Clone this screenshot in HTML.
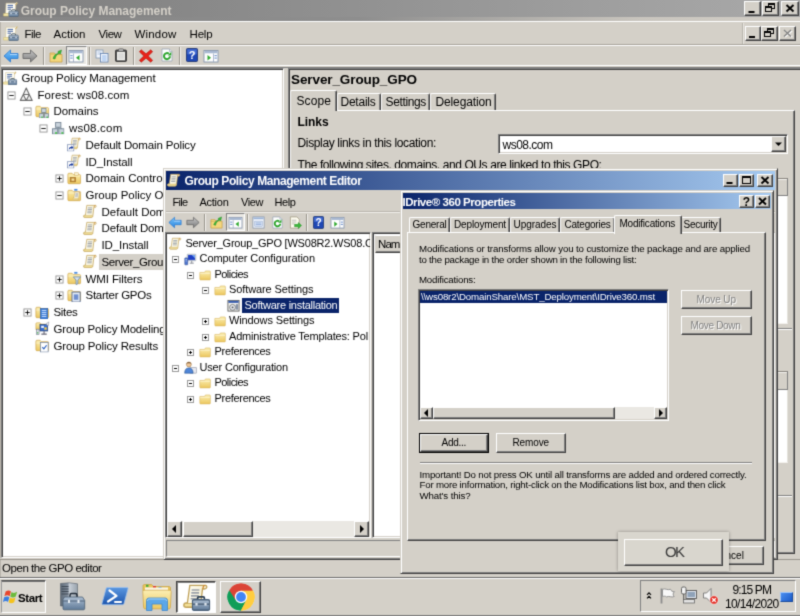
<!DOCTYPE html>
<html><head><meta charset="utf-8"><title>Group Policy Management</title>
<style>
*{box-sizing:border-box;margin:0;padding:0}
html,body{width:800px;height:616px;overflow:hidden;background:#d4d0c8}
body{position:relative;font-family:"Liberation Sans",sans-serif;font-size:12px;color:#000;filter:url(#soft)}
.a{position:absolute;white-space:nowrap}
.sunk{border:1px solid;border-color:#808080 #fff #fff #808080;box-shadow:inset 1px 1px 0 #404040,inset -1px -1px 0 #d4d0c8}
.rais{border:1px solid;border-color:#fff #404040 #404040 #fff;box-shadow:inset -1px -1px 0 #808080;background:#d4d0c8}
.win{border:1px solid;border-color:#d4d0c8 #404040 #404040 #d4d0c8;box-shadow:inset 1px 1px 0 #fff,inset -1px -1px 0 #808080;background:#d4d0c8}
.cap{background:linear-gradient(90deg,#0a246a,#a6caf0)}
.capi{background:linear-gradient(90deg,#7e7e7e,#a9a9a9)}
.vsep{width:2px;border-left:1px solid #9a968e;border-right:1px solid #f4f2ee}
.hsep{height:2px;border-top:1px solid #808080;border-bottom:1px solid #fff}
.pm{width:9px;height:9px;border:1px solid #929292;background:#fff}
.pm:before{content:"";position:absolute;left:1px;top:3px;width:5px;height:1px;background:#000}
.pm.p:after{content:"";position:absolute;left:3px;top:1px;width:1px;height:5px;background:#000}
.pm7{width:7px;height:7px;border:1px solid #9a9a9a;background:#fff}
.pm7:before{content:"";position:absolute;left:1px;top:2px;width:3px;height:1px;background:#000}
.pm7.p:after{content:"";position:absolute;left:2px;top:1px;width:1px;height:3px;background:#000}
.hatch{background:#eae8e3}
.clip{overflow:hidden}
.tab{background:#d4d0c8;border:1px solid;border-color:#fff #404040 transparent #fff;border-bottom:none;box-shadow:inset -1px 0 0 #808080;border-radius:2px 2px 0 0}
.page{background:#d4d0c8;border:1px solid;border-color:#fff #404040 #404040 #fff;box-shadow:inset -1px -1px 0 #808080}
.dis{color:#808080;text-shadow:1px 1px 0 #fff}
</style></head><body>
<svg width="0" height="0" style="position:absolute">
<defs>
<filter id="soft" x="0" y="0" width="100%" height="100%" color-interpolation-filters="sRGB"><feConvolveMatrix order="3" kernelMatrix="0.0225 0.105 0.0225 0.105 0.49 0.105 0.0225 0.105 0.0225" edgeMode="duplicate" preserveAlpha="true"/></filter>
<linearGradient id="gpap" x1="0" y1="0" x2="1" y2="0"><stop offset="0" stop-color="#fffef6"/><stop offset="1" stop-color="#f6efd0"/></linearGradient>
<linearGradient id="gfold" x1="0" y1="0" x2="0" y2="1"><stop offset="0" stop-color="#fbefb4"/><stop offset="1" stop-color="#ecc75e"/></linearGradient>
<linearGradient id="gbox" x1="0" y1="0" x2="0" y2="1"><stop offset="0" stop-color="#aebfd2"/><stop offset="1" stop-color="#5f7a98"/></linearGradient>
<linearGradient id="gblue" x1="0" y1="0" x2="0" y2="1"><stop offset="0" stop-color="#7cc4f8"/><stop offset="1" stop-color="#2a86e0"/></linearGradient>
<linearGradient id="ggray" x1="0" y1="0" x2="0" y2="1"><stop offset="0" stop-color="#c8c8c8"/><stop offset="1" stop-color="#7a7a7a"/></linearGradient>
<symbol id="scroll" viewBox="0 0 16 16">
 <path d="M4.200 1.500h9.500c.9 0 1.200.9.700 1.600-.3.500-.8.600-1.400.600h-1l-1.100 9.300c-.1 1.200-.8 2-1.800 2H2c-.9 0-1.500-.6-1.500-1.300 0-.8.600-1.400 1.500-1.400h.700z" fill="url(#gpap)" stroke="#c0a25a" stroke-width=".8"/>
 <path d="M1.200 12.600h8.600c.5 0 .8.400.8.900 0 .6-.4 1.100-1 1.100H2c-.6 0-1.100-.4-1.100-1 0-.5.100-.8.300-1z" fill="#f3e09a" stroke="#c9aa58" stroke-width=".5"/>
 <path d="M12.200 3.600l.3-1.400c.1-.5.600-.7 1.200-.7" fill="none" stroke="#d08a30" stroke-width=".8"/>
 <path d="M5.300 4.300h4.800M5.100 6.100h4.800M4.900 7.900h4.800M4.700 9.700h4.800" stroke="#9aa0a8" stroke-width="1"/>
</symbol>
<symbol id="toolbox" viewBox="0 0 10 8">
 <path d="M3.200 2V1.100c0-.4.300-.6.600-.6h2.400c.3 0 .6.200.6.600V2" fill="none" stroke="#2c3e50" stroke-width=".9"/>
 <rect x=".4" y="2" width="9.200" height="5.600" rx=".8" fill="url(#gbox)" stroke="#4a6078" stroke-width=".7"/>
 <path d="M.5 4.300h9" stroke="#465a70" stroke-width=".6"/>
 <rect x="2" y="3.700" width="1.200" height="1.400" fill="#dfe6ee"/><rect x="6.800" y="3.700" width="1.200" height="1.400" fill="#dfe6ee"/>
</symbol>
<symbol id="gpmc" viewBox="0 0 16 15">
 <path d="M3 1.200h9.300l1.600-.8.600.9-1.700 1.500-.7 9H2.600z" fill="#fffdf3" stroke="#cfc49c" stroke-width=".6"/>
 <path d="M.6 11.600h6.400v2.400H.6z" fill="#f5e9b0" stroke="#d2bf74" stroke-width=".6"/>
 <path d="M12.300 2.800l2-1.800" stroke="#c89a3c" stroke-width=".9"/>
 <path d="M4.600 3.400h5.400M4.600 5.300h5.400M4.600 7.200h3.400" stroke="#4464a4" stroke-width="1"/>
 <svg x="5.300" y="7.200" width="10.500" height="7.800" viewBox="0 0 10 8" preserveAspectRatio="none"><use href="#toolbox"/></svg>
</symbol>
<symbol id="gpolink" viewBox="0 0 16 16">
 <svg x="2" y="0" width="14" height="14"><use href="#scroll"/></svg>
 <rect x=".5" y="8.500" width="7" height="7" fill="#fff" stroke="#7d8fb3" stroke-width=".8"/>
 <path d="M2 14.200c0-2.400 1-3.500 3-3.500v-1.400l2 2.200-2 2.200v-1.400c-1.400 0-2.200.6-3 1.900z" fill="#1a3a9c"/>
</symbol>
<symbol id="forest" viewBox="0 0 16 16">
 <path d="M8 1.200 11.300 8.200H4.700zM4.700 8.200 8 14.800H1.400zM11.300 8.200 14.600 14.800H8z" fill="#f2f2f2" stroke="#6c6c6c" stroke-width="1.200" stroke-linejoin="round"/>
</symbol>
<symbol id="folder" viewBox="0 0 16 16">
 <path d="M1 3.500c0-.6.400-1 1-1h3.600l1.400 1.500H14c.6 0 1 .4 1 1v8c0 .6-.4 1-1 1H2c-.6 0-1-.4-1-1z" fill="url(#gfold)" stroke="#d0a850" stroke-width=".8"/>
 <path d="M1.400 5.600h13.200" stroke="#fdf6d0" stroke-width=".8"/>
</symbol>
<symbol id="folder2" viewBox="0 0 14 13">
 <path d="M1 3.500h5.500l1-1.700h5c.4 0 .7.300.7.700V11.500c0 .4-.3.700-.7.700H1.700c-.4 0-.7-.3-.7-.7z" fill="url(#gfold)" stroke="#d9b65e" stroke-width=".7"/>
 <path d="M1.400 4.600h11.400" stroke="#fdf6d4" stroke-width=".8"/>
</symbol>
<symbol id="srv3" viewBox="0 0 12 12">
 <rect x="3.500" y=".5" width="5" height="4.500" fill="#c9d3dc" stroke="#6f7f8f" stroke-width=".8"/>
 <rect x=".5" y="6.500" width="5" height="5" fill="#c9d3dc" stroke="#6f7f8f" stroke-width=".8"/>
 <rect x="6.500" y="6.500" width="5" height="5" fill="#c9d3dc" stroke="#6f7f8f" stroke-width=".8"/>
 <path d="M6 5v1.500M3 6.500V5.800h6v.7" stroke="#6f7f8f" stroke-width=".7" fill="none"/>
 <rect x="3" y="9.800" width="1.800" height="1.400" fill="#35c035"/><rect x="9" y="9.800" width="1.800" height="1.400" fill="#35c035"/>
</symbol>
<symbol id="domain" viewBox="0 0 16 16"><svg x="1" y="1" width="14" height="14"><use href="#srv3"/></svg></symbol>
<symbol id="domfolder" viewBox="0 0 16 16"><use href="#folder"/><svg x="4" y="4.500" width="11.500" height="11.500"><use href="#srv3"/></svg></symbol>
<symbol id="ou" viewBox="0 0 16 16"><use href="#folder"/><rect x="3.500" y="7" width="6" height="5" fill="#c08a3a" stroke="#9a6a22" stroke-width=".6"/><rect x="5" y="8.300" width="3" height="2.400" fill="#f6e3a0"/><rect x="8.500" y="2" width="4" height="3" fill="#f8f0d0" stroke="#d0a850" stroke-width=".5"/></symbol>
<symbol id="gpofolder" viewBox="0 0 16 16"><use href="#folder"/><svg x="6" y="3" width="10" height="11"><use href="#scroll"/></svg><rect x="8" y="1" width="3.500" height="2" fill="#4a8be0"/></symbol>
<symbol id="wmifolder" viewBox="0 0 16 16"><use href="#folder"/><path d="M7 6.500h8l-3 3.500v4l-2 1v-5z" fill="#d8e4f0" stroke="#5d7ea0" stroke-width=".8"/><rect x="8" y="1" width="3.500" height="2" fill="#4a8be0"/></symbol>
<symbol id="startergpo" viewBox="0 0 16 16"><use href="#folder"/><rect x="5.500" y="4.500" width="9" height="11" fill="#e4ecf6" stroke="#4b5f88" stroke-width=".9"/><rect x="7.500" y="7" width="5" height="6" fill="#6f8fd0"/></symbol>
<symbol id="sites" viewBox="0 0 16 16"><use href="#folder"/><rect x="6" y="4" width="8" height="11.500" fill="#3f7fd8" stroke="#2457a6" stroke-width=".7"/><path d="M7.500 6h5M7.500 8.200h5M7.500 10.400h5M7.500 12.600h5" stroke="#d6e6ff" stroke-width="1"/></symbol>
<symbol id="modeling" viewBox="0 0 16 16"><path d="M1 3c0-.6.400-1 1-1h3.600l1.400 1.500H11v6H1z" fill="url(#gfold)" stroke="#d0a850" stroke-width=".7"/><rect x="5.500" y="4" width="8.500" height="7" fill="#3a6fd0" stroke="#27406f" stroke-width=".8"/><rect x="6.800" y="5.300" width="3" height="2.400" fill="#e8f0ff"/><rect x="10.300" y="7" width="2.600" height="2.600" fill="#ffd24a"/><path d="M7 14.500h6M10 11v3.500" stroke="#667" stroke-width="1.200"/><rect x="1.500" y="9" width="3" height="6" fill="#d9dee6" stroke="#6a7484" stroke-width=".6"/><rect x="2.300" y="12.500" width="1.300" height="1.200" fill="#2fb82f"/><path d="M12 3l3.500-2-1 4.500z" fill="#e6ebf2" stroke="#778" stroke-width=".5"/></symbol>
<symbol id="results" viewBox="0 0 16 16"><use href="#folder"/><rect x="6" y="5" width="8.500" height="10.500" fill="#fff" stroke="#6d7f9f" stroke-width=".8"/><path d="M8 10l1.800 2 3-4" fill="none" stroke="#2a5fc0" stroke-width="1.300"/></symbol>
<symbol id="back" viewBox="0 0 16 14"><path d="M7.500 1 1 7l6.500 6V9.500H15v-5H7.500z" fill="url(#gblue)" stroke="#2a78d0" stroke-width=".8" stroke-linejoin="round"/><path d="M7 5.500h7" stroke="#b9dcff" stroke-width=".9"/></symbol>
<symbol id="fwd" viewBox="0 0 16 14"><path d="M8.500 1 15 7l-6.500 6V9.500H1v-5h7.500z" fill="url(#ggray)" stroke="#6a6a6a" stroke-width=".9" stroke-linejoin="round"/></symbol>
<symbol id="upfolder" viewBox="0 0 14 14"><path d="M1 5.500h12v7.500H1z" fill="#f4d77c" stroke="#c9a14a" stroke-width=".8"/><path d="M1 5.500V4h4.500l1 1.500" fill="#f4d77c" stroke="#c9a14a" stroke-width=".8"/><path d="M4 9.500c1-3 2.500-4.500 5-5V2.500L12.500 1 11.500 5 10 4.500C8 5.500 6.500 7 6 10z" fill="#3cb83c" stroke="#1e8a1e" stroke-width=".5"/></symbol>
<symbol id="showtree" viewBox="0 0 16 14"><rect x="1" y="1.500" width="14" height="11.500" fill="#fff" stroke="#8494ac" stroke-width=".9"/><rect x="1.500" y="2" width="13" height="2.300" fill="#a9b9d2"/><path d="M5.500 4.500V13" stroke="#9aa8c0" stroke-width=".8"/><rect x="2.300" y="6" width="2.300" height="1.200" fill="#7a9ad0"/><rect x="2.300" y="8.500" width="2.300" height="1.200" fill="#7a9ad0"/><path d="M11.500 6v5.500L8 8.700z" fill="#2fa82f"/></symbol>
<symbol id="hidepane" viewBox="0 0 16 14"><rect x="1" y="1.500" width="14" height="11.500" fill="#fff" stroke="#8494ac" stroke-width=".9"/><rect x="1.500" y="2" width="13" height="2.300" fill="#a9b9d2"/><path d="M10.500 4.500V13" stroke="#9aa8c0" stroke-width=".8"/><rect x="11.500" y="6" width="2.300" height="1.200" fill="#7a9ad0"/><rect x="11.500" y="8.500" width="2.300" height="1.200" fill="#7a9ad0"/><path d="M4.500 6v5.500L8 8.700z" fill="#2fa82f"/></symbol>
<symbol id="copy" viewBox="0 0 14 14"><rect x="1" y="1" width="7" height="8" fill="#f4f8ff" stroke="#7f93b0" stroke-width=".8"/><rect x="5.500" y="4.500" width="7.500" height="8.500" fill="#f4f8ff" stroke="#5f7fb0" stroke-width=".8"/><path d="M7 7h4.500M7 9h4.500M7 11h4.500" stroke="#6f9fe0" stroke-width=".8"/><path d="M2.500 3h4M2.500 5h2.500" stroke="#9fb3d0" stroke-width=".8"/></symbol>
<symbol id="paste" viewBox="0 0 14 14"><rect x="1.500" y="2" width="11" height="11.500" rx="1" fill="#4e4e4e" stroke="#2a2a2a" stroke-width=".8"/><rect x="3" y="3.800" width="8" height="8.500" fill="#f4f4f0"/><path d="M4 6h6M4 8h6M4 10h6" stroke="#b8b8b8" stroke-width=".8"/><rect x="4.500" y=".8" width="5" height="2.600" rx=".8" fill="#b8b8b8" stroke="#444" stroke-width=".6"/></symbol>
<symbol id="del" viewBox="0 0 14 14"><path d="M2.200 .8 7 4.800 11.800 .8 13.600 2.800 9.200 7l4.400 4.200-1.800 2L7 9.200 2.200 13.200.4 11.200 4.800 7 .4 2.800z" fill="#e8231a" stroke="#b01008" stroke-width=".6" stroke-linejoin="round"/></symbol>
<symbol id="refresh" viewBox="0 0 14 14"><path d="M2 1h7.500L12 3.500V13H2z" fill="#fff" stroke="#9aa5b4" stroke-width=".8"/><path d="M9.500 1v2.500H12" fill="#e4e9f0" stroke="#9aa5b4" stroke-width=".6"/><path d="M10 8.300a3 3 0 1 1-1.100-2.500" fill="none" stroke="#2ea52e" stroke-width="2"/><path d="M11.300 3.800v3.600H7.700z" fill="#2ea52e"/></symbol>
<symbol id="help" viewBox="0 0 12 14"><rect x=".5" y=".5" width="11" height="13" rx="1" fill="#1f47b4" stroke="#122a6a" stroke-width=".8"/><rect x="1.300" y="1.300" width="9.400" height="5" fill="#5d86e6" opacity=".6"/><text x="6" y="11.300" font-family="Liberation Sans, sans-serif" font-size="11" font-weight="bold" fill="#fff" text-anchor="middle">?</text></symbol>
<symbol id="props" viewBox="0 0 14 14"><rect x="1" y="1" width="12" height="12" fill="#f8fbff" stroke="#7f8fa8" stroke-width=".8"/><rect x="1.500" y="1.500" width="11" height="2" fill="#9db3d6"/><rect x="3" y="5.500" width="8" height="5.500" fill="#dfe9f8" stroke="#8aa0c8" stroke-width=".6"/><path d="M4 7.500h6M4 9.300h6" stroke="#6f8fc8" stroke-width=".7"/></symbol>
<symbol id="export" viewBox="0 0 14 14"><path d="M1.500 1h7L11 3.500V13H1.500z" fill="#fffdf0" stroke="#a09a80" stroke-width=".8"/><path d="M3 4.500h5M3 6.500h5M3 8.500h3" stroke="#a8a8a8" stroke-width=".8"/><path d="M6 9h4V7l3.500 3.200L10 13.500v-2H6z" fill="#3cb83c" stroke="#1e8a1e" stroke-width=".5"/></symbol>
<symbol id="computer" viewBox="0 0 16 16"><rect x="4" y="1.500" width="10.500" height="8" rx=".6" fill="#dfe4ea" stroke="#8a94a4" stroke-width=".7"/><rect x="5" y="2.500" width="8.500" height="6" fill="#1f3fc4"/><path d="M9.500 2.500h4v4z" fill="#6fa4f4"/><path d="M7 12.500h5M9.500 9.500v3" stroke="#8a8f98" stroke-width="1.200"/><rect x="1" y="6" width="3.600" height="8.500" rx=".6" fill="#4f78d0" stroke="#2a478f" stroke-width=".7"/><path d="M1.800 8h2M1.800 9.800h2" stroke="#cfe0ff" stroke-width=".7"/></symbol>
<symbol id="user" viewBox="0 0 16 16"><rect x="7" y="8" width="8.500" height="7" rx=".6" fill="#e8e8ee" stroke="#8890a0" stroke-width=".7"/><circle cx="6" cy="4.300" r="3" fill="#f0c89a" stroke="#9a7040" stroke-width=".7"/><path d="M3 3.500c.5-2.500 5.500-2.500 6 0-1.500-.8-4.500-.8-6 0z" fill="#6a4a2a"/><path d="M.8 15c0-4.500 2-6.500 5.200-6.500s5.200 2 5.200 6.500z" fill="#4f86d8" stroke="#24508f" stroke-width=".7"/></symbol>
<symbol id="swinst" viewBox="0 0 14 14"><rect x="1" y="1.500" width="12" height="11.500" fill="#f4f4f0" stroke="#555" stroke-width=".9"/><rect x="1.500" y="2" width="11" height="2.200" fill="#3a5fb0"/><circle cx="6" cy="9" r="3.200" fill="#e0e4ea" stroke="#555" stroke-width=".7"/><circle cx="6" cy="9" r="1" fill="#555"/><rect x="9.500" y="5.500" width="2.500" height="6" fill="#8894a8"/></symbol>
</defs></svg>
<div class="a capi" style="left:0px;top:0px;width:800px;height:18px;"></div>
<div class="a " style="left:0px;top:17px;width:800px;height:4px;background:linear-gradient(90deg,#858585 0%,#8e8e8e 45%,#c9c5be 80%,#d2cec6 100%)"></div>
<div class="a " style="left:0px;top:21px;width:800px;height:1px;background:#fff"></div>
<svg class="a" style="left:2.5px;top:2px" width="16" height="15"><use href="#gpmc"/></svg>
<div class="a" style="left:20.80px;top:2.50px;font-size:12px;line-height:16px;letter-spacing:-0.029px;color:#d4d0c8;font-weight:bold;">Group Policy Management</div>
<div class="a rais" style="left:744px;top:1px;width:17px;height:15px;"><svg width="15" height="13" viewBox="1 1 15 13" style="display:block"><rect x="4.5" y="10" width="6" height="2" fill="#000"/></svg></div>
<div class="a rais" style="left:762px;top:1px;width:17px;height:15px;"><svg width="15" height="13" viewBox="1 1 15 13" style="display:block"><rect x="6.5" y="2.5" width="6" height="5" fill="none" stroke="#000"/><rect x="6.0" y="2.0" width="7" height="2" fill="#000"/><rect x="3.5" y="5.5" width="6" height="5" fill="#d4d0c8" stroke="#000"/><rect x="3.0" y="5.0" width="7" height="2" fill="#000"/></svg></div>
<div class="a rais" style="left:781px;top:1px;width:18px;height:15px;"><svg width="16" height="13" viewBox="1 1 16 13" style="display:block"><path d="M5.5 4.0l7 6.500M12.5 4.0l-7 6.500" stroke="#000" stroke-width="1.9"/></svg></div>
<svg class="a" style="left:2.5px;top:26px" width="16" height="15"><use href="#gpmc"/></svg>
<div class="a" style="left:24.50px;top:25.70px;font-size:11.5px;line-height:16px;letter-spacing:-0.508px;color:#000;">File</div>
<div class="a" style="left:53.50px;top:25.70px;font-size:11.5px;line-height:16px;letter-spacing:0.005px;color:#000;">Action</div>
<div class="a" style="left:98.50px;top:25.70px;font-size:11.5px;line-height:16px;letter-spacing:-0.430px;color:#000;">View</div>
<div class="a" style="left:134.50px;top:25.70px;font-size:11.5px;line-height:16px;letter-spacing:0.182px;color:#000;">Window</div>
<div class="a" style="left:189.50px;top:25.70px;font-size:11.5px;line-height:16px;letter-spacing:-0.164px;color:#000;">Help</div>
<div class="a rais" style="left:745px;top:26px;width:16px;height:15px;"><svg width="14" height="13" viewBox="1 1 14 13" style="display:block"><rect x="4.0" y="10" width="6" height="2" fill="#000"/></svg></div>
<div class="a rais" style="left:761px;top:26px;width:17px;height:15px;"><svg width="15" height="13" viewBox="1 1 15 13" style="display:block"><rect x="6.5" y="2.5" width="6" height="5" fill="none" stroke="#000"/><rect x="6.0" y="2.0" width="7" height="2" fill="#000"/><rect x="3.5" y="5.5" width="6" height="5" fill="#d4d0c8" stroke="#000"/><rect x="3.0" y="5.0" width="7" height="2" fill="#000"/></svg></div>
<div class="a rais" style="left:779px;top:26px;width:17px;height:15px;"><svg width="15" height="13" viewBox="1 1 15 13" style="display:block"><path d="M6.0 5.0l7 6M13.0 5.0l-7 6" stroke="#fff" stroke-width="1.6"/><path d="M5.0 4.0l7 6.500M12.0 4.0l-7 6.500" stroke="#808080" stroke-width="1.3"/></svg></div>
<div class="a vsep" style="left:742px;top:23px;width:2px;height:21px;border-right-color:#e8e6e0;border-left-color:#b8b4ac"></div>
<div class="a " style="left:0px;top:44px;width:800px;height:2px;border-top:1px solid #a8a49c;border-bottom:1px solid #fff"></div>
<svg class="a" style="left:3px;top:49px" width="16" height="14"><use href="#back"/></svg>
<svg class="a" style="left:22px;top:49px" width="16" height="14"><use href="#fwd"/></svg>
<div class="a vsep" style="left:43px;top:47px;width:2px;height:18px;"></div>
<svg class="a" style="left:49px;top:49px" width="14" height="14"><use href="#upfolder"/></svg>
<div class="a sunk hatch" style="left:66px;top:46px;width:21px;height:19px;box-shadow:none"></div>
<svg class="a" style="left:68px;top:49px" width="16" height="14"><use href="#showtree"/></svg>
<div class="a vsep" style="left:89px;top:47px;width:2px;height:18px;"></div>
<svg class="a" style="left:95px;top:49px" width="14" height="14"><use href="#copy"/></svg>
<svg class="a" style="left:114px;top:48px" width="14" height="14"><use href="#paste"/></svg>
<div class="a vsep" style="left:133px;top:47px;width:2px;height:18px;"></div>
<svg class="a" style="left:139px;top:49px" width="14" height="14"><use href="#del"/></svg>
<svg class="a" style="left:160px;top:48px" width="14" height="14"><use href="#refresh"/></svg>
<div class="a vsep" style="left:179px;top:47px;width:2px;height:18px;"></div>
<svg class="a" style="left:186px;top:48px" width="12" height="14"><use href="#help"/></svg>
<svg class="a" style="left:203px;top:49px" width="16" height="14"><use href="#hidepane"/></svg>
<div class="a " style="left:0px;top:65px;width:800px;height:3px;border-top:1px solid #fff;border-bottom:1px solid #808080;background:#d4d0c8"></div>
<div class="a sunk" style="left:1px;top:68px;width:283px;height:490px;background:#fff"></div>
<div class="a " style="left:0px;top:22px;width:1px;height:556px;background:#b8b4ac"></div>
<svg class="a" style="left:3.3px;top:70.55px" width="14.5" height="14.5"><use href="#gpmc"/></svg>
<div class="a" style="left:21.50px;top:70.00px;font-size:11.5px;line-height:16px;letter-spacing:-0.094px;color:#000;">Group Policy Management</div>
<svg class="a" style="left:19.3px;top:87.27px" width="14.5" height="14.5"><use href="#forest"/></svg>
<div class="a pm" style="left:6.5px;top:91px;width:9px;height:9px;transform:scale(0.89)"></div>
<div class="a" style="left:37.50px;top:86.72px;font-size:11.5px;line-height:16px;letter-spacing:0.078px;color:#000;">Forest: ws08.com</div>
<svg class="a" style="left:35.3px;top:103.99px" width="14.5" height="14.5"><use href="#domfolder"/></svg>
<div class="a pm" style="left:22.5px;top:107px;width:9px;height:9px;transform:scale(0.89)"></div>
<div class="a" style="left:53.50px;top:103.44px;font-size:11.5px;line-height:16px;letter-spacing:-0.056px;color:#000;">Domains</div>
<svg class="a" style="left:51.3px;top:120.71px" width="14.5" height="14.5"><use href="#domain"/></svg>
<div class="a pm" style="left:38.5px;top:124px;width:9px;height:9px;transform:scale(0.89)"></div>
<div class="a" style="left:69.00px;top:120.16px;font-size:11.5px;line-height:16px;letter-spacing:0.215px;color:#000;">ws08.com</div>
<svg class="a" style="left:67.3px;top:137.43px" width="14.5" height="14.5"><use href="#gpolink"/></svg>
<div class="a" style="left:85.50px;top:136.88px;font-size:11.5px;line-height:16px;letter-spacing:-0.150px;color:#000;">Default Domain Policy</div>
<svg class="a" style="left:67.3px;top:154.15px" width="14.5" height="14.5"><use href="#gpolink"/></svg>
<div class="a" style="left:85.50px;top:153.60px;font-size:11.5px;line-height:16px;letter-spacing:-0.094px;color:#000;">ID_Install</div>
<svg class="a" style="left:67.3px;top:170.87px" width="14.5" height="14.5"><use href="#ou"/></svg>
<div class="a pm p" style="left:54.5px;top:174px;width:9px;height:9px;transform:scale(0.89)"></div>
<div class="a" style="left:85.50px;top:170.32px;font-size:11.5px;line-height:16px;letter-spacing:-0.024px;color:#000;">Domain Controllers</div>
<svg class="a" style="left:67.3px;top:187.59px" width="14.5" height="14.5"><use href="#gpofolder"/></svg>
<div class="a pm" style="left:54.5px;top:191px;width:9px;height:9px;transform:scale(0.89)"></div>
<div class="a" style="left:85.50px;top:187.04px;font-size:11.5px;line-height:16px;letter-spacing:-0.001px;color:#000;">Group Policy Objects</div>
<svg class="a" style="left:83.3px;top:204.31px" width="14.5" height="14.5"><use href="#scroll"/></svg>
<div class="a" style="left:101.50px;top:203.76px;font-size:11.5px;line-height:16px;letter-spacing:0.002px;color:#000;">Default Domain Controllers Policy</div>
<svg class="a" style="left:83.3px;top:221.03px" width="14.5" height="14.5"><use href="#scroll"/></svg>
<div class="a" style="left:101.50px;top:220.48px;font-size:11.5px;line-height:16px;letter-spacing:-0.150px;color:#000;">Default Domain Policy</div>
<svg class="a" style="left:83.3px;top:237.75px" width="14.5" height="14.5"><use href="#scroll"/></svg>
<div class="a" style="left:101.50px;top:237.20px;font-size:11.5px;line-height:16px;letter-spacing:-0.094px;color:#000;">ID_Install</div>
<div class="a " style="left:99px;top:254px;width:104px;height:16px;background:#d4d0c8"></div>
<svg class="a" style="left:83.3px;top:254.46999999999997px" width="14.5" height="14.5"><use href="#scroll"/></svg>
<div class="a" style="left:101.50px;top:253.92px;font-size:11.5px;line-height:16px;letter-spacing:-0.387px;color:#000;">Server_Group_GPO</div>
<svg class="a" style="left:67.3px;top:271.19px" width="14.5" height="14.5"><use href="#wmifolder"/></svg>
<div class="a pm p" style="left:54.5px;top:275px;width:9px;height:9px;transform:scale(0.89)"></div>
<div class="a" style="left:85.50px;top:270.64px;font-size:11.5px;line-height:16px;letter-spacing:-0.104px;color:#000;">WMI Filters</div>
<svg class="a" style="left:67.3px;top:287.91px" width="14.5" height="14.5"><use href="#startergpo"/></svg>
<div class="a pm p" style="left:54.5px;top:291px;width:9px;height:9px;transform:scale(0.89)"></div>
<div class="a" style="left:85.50px;top:287.36px;font-size:11.5px;line-height:16px;letter-spacing:-0.253px;color:#000;">Starter GPOs</div>
<svg class="a" style="left:35.3px;top:304.63px" width="14.5" height="14.5"><use href="#sites"/></svg>
<div class="a pm p" style="left:22.5px;top:308px;width:9px;height:9px;transform:scale(0.89)"></div>
<div class="a" style="left:53.50px;top:304.08px;font-size:11.5px;line-height:16px;letter-spacing:-0.316px;color:#000;">Sites</div>
<svg class="a" style="left:35.3px;top:321.34999999999997px" width="14.5" height="14.5"><use href="#modeling"/></svg>
<div class="a" style="left:53.50px;top:320.80px;font-size:11.5px;line-height:16px;letter-spacing:-0.176px;color:#000;">Group Policy Modeling</div>
<svg class="a" style="left:35.3px;top:338.07px" width="14.5" height="14.5"><use href="#results"/></svg>
<div class="a" style="left:53.50px;top:337.52px;font-size:11.5px;line-height:16px;letter-spacing:-0.144px;color:#000;">Group Policy Results</div>
<div class="a " style="left:288px;top:68px;width:512px;height:490px;border-left:1px solid #808080;border-top:1px solid #808080;box-shadow:inset 1px 1px 0 #404040"></div>
<div class="a" style="left:291.00px;top:72.00px;font-size:13.5px;line-height:16px;letter-spacing:-0.098px;color:#000;font-weight:bold;">Server_Group_GPO</div>
<div class="a page" style="left:290px;top:110px;width:505px;height:444px;"></div>
<div class="a tab" style="left:337px;top:93px;width:44px;height:17px;"></div>
<div class="a" style="left:340.50px;top:94.00px;font-size:12px;line-height:16px;letter-spacing:-0.241px;color:#000;">Details</div>
<div class="a tab" style="left:381px;top:93px;width:49px;height:17px;"></div>
<div class="a" style="left:385.50px;top:94.00px;font-size:12px;line-height:16px;letter-spacing:-0.357px;color:#000;">Settings</div>
<div class="a tab" style="left:430px;top:93px;width:66px;height:17px;"></div>
<div class="a" style="left:435.50px;top:94.00px;font-size:12px;line-height:16px;letter-spacing:-0.138px;color:#000;">Delegation</div>
<div class="a tab" style="left:290px;top:90px;width:47px;height:21px;"></div>
<div class="a" style="left:296.50px;top:92.50px;font-size:12px;line-height:16px;letter-spacing:0.094px;color:#000;">Scope</div>
<div class="a" style="left:297.50px;top:114.00px;font-size:12px;line-height:16px;letter-spacing:-0.069px;color:#000;font-weight:bold;">Links</div>
<div class="a" style="left:297.50px;top:134.50px;font-size:12px;line-height:16px;letter-spacing:-0.352px;color:#000;">Display links in this location:</div>
<div class="a" style="left:297.50px;top:157.00px;font-size:12px;line-height:16px;letter-spacing:-0.407px;color:#000;">The following sites, domains, and OUs are linked to this GPO:</div>
<div class="a sunk" style="left:498px;top:134px;width:290px;height:20px;background:#fff"></div>
<div class="a" style="left:502.50px;top:137.00px;font-size:12px;line-height:16px;letter-spacing:-0.504px;color:#000;">ws08.com</div>
<div class="a rais" style="left:771px;top:136px;width:15px;height:16px;"><svg width="13" height="14" style="display:block"><path d="M3 5.500h7l-3.500 3.500z" fill="#000"/></svg></div>
<div class="a " style="left:777px;top:178px;width:11px;height:146px;background:#fff;border-right:1px solid #e4e2dc;border-bottom:1px solid #f4f2ee"></div>
<div class="a " style="left:777px;top:178px;width:11px;height:18px;background:#d4d0c8;border-top:1px solid #8a8680;box-shadow:inset 0 1px 0 #f4f2ee;border-bottom:1px solid #808080;border-right:1px solid #808080"></div>
<div class="a hsep" style="left:776px;top:328px;width:16px;height:2px;"></div>
<div class="a " style="left:777px;top:371px;width:11px;height:92px;background:#fff;border-right:1px solid #e4e2dc;border-bottom:1px solid #f4f2ee"></div>
<div class="a " style="left:777px;top:371px;width:11px;height:19px;background:#d4d0c8;border-top:1px solid #8a8680;box-shadow:inset 0 1px 0 #f4f2ee;border-bottom:1px solid #808080;border-right:1px solid #808080"></div>
<div class="a hsep" style="left:776px;top:495px;width:16px;height:2px;"></div>
<div class="a " style="left:0px;top:558px;width:800px;height:1px;background:#d4d0c8"></div>
<div class="a " style="left:0px;top:559px;width:800px;height:18px;border-top:1px solid #9a968e"></div>
<div class="a" style="left:2.00px;top:560.00px;font-size:11.5px;line-height:16px;letter-spacing:-0.450px;color:#000;">Open the GPO editor</div>
<div class="a win" style="left:163px;top:168px;width:615px;height:392px;"></div>
<div class="a cap" style="left:166px;top:171px;width:609px;height:19px;"></div>
<svg class="a" style="left:167px;top:173px" width="14" height="14"><use href="#scroll"/></svg>
<div class="a" style="left:184.50px;top:172.50px;font-size:12px;line-height:16px;letter-spacing:-0.412px;color:#fff;font-weight:bold;">Group Policy Management Editor</div>
<div class="a rais" style="left:723px;top:174px;width:15px;height:13px;"><svg width="13" height="11" viewBox="1 1 13 11" style="display:block"><rect x="3.5" y="8" width="6" height="2" fill="#000"/></svg></div>
<div class="a rais" style="left:739px;top:174px;width:15px;height:13px;"><svg width="13" height="11" viewBox="1 1 13 11" style="display:block"><rect x="3.5" y="2.5" width="8" height="7" fill="none" stroke="#000" stroke-width="1"/><rect x="3.0" y="2.0" width="9" height="2" fill="#000"/></svg></div>
<div class="a rais" style="left:757px;top:174px;width:16px;height:13px;"><svg width="14" height="11" viewBox="1 1 14 11" style="display:block"><path d="M4.5 3.0l7 6.500M11.5 3.0l-7 6.500" stroke="#000" stroke-width="1.9"/></svg></div>
<div class="a" style="left:172.50px;top:193.70px;font-size:11px;line-height:16px;letter-spacing:-0.684px;color:#000;">File</div>
<div class="a" style="left:199.50px;top:193.70px;font-size:11px;line-height:16px;letter-spacing:-0.263px;color:#000;">Action</div>
<div class="a" style="left:241.00px;top:193.70px;font-size:11px;line-height:16px;letter-spacing:-0.414px;color:#000;">View</div>
<div class="a" style="left:274.50px;top:193.70px;font-size:11px;line-height:16px;letter-spacing:-0.406px;color:#000;">Help</div>
<div class="a " style="left:166px;top:211px;width:609px;height:2px;border-top:1px solid #bab6ae;border-bottom:1px solid #f0eeea"></div>
<svg class="a" style="left:168px;top:216px" width="14" height="13"><use href="#back"/></svg>
<svg class="a" style="left:186px;top:216px" width="14" height="13"><use href="#fwd"/></svg>
<div class="a vsep" style="left:204px;top:214px;width:2px;height:17px;"></div>
<svg class="a" style="left:210px;top:216px" width="13" height="13"><use href="#upfolder"/></svg>
<div class="a sunk hatch" style="left:226px;top:213px;width:19px;height:18px;box-shadow:none"></div>
<svg class="a" style="left:228px;top:216px" width="15" height="13"><use href="#showtree"/></svg>
<div class="a vsep" style="left:247px;top:214px;width:2px;height:17px;"></div>
<svg class="a" style="left:252px;top:216px" width="13" height="13"><use href="#props"/></svg>
<svg class="a" style="left:271px;top:216px" width="13" height="13"><use href="#refresh"/></svg>
<svg class="a" style="left:289px;top:216px" width="13" height="13"><use href="#export"/></svg>
<div class="a vsep" style="left:306px;top:214px;width:2px;height:17px;"></div>
<svg class="a" style="left:313px;top:216px" width="11" height="13"><use href="#help"/></svg>
<svg class="a" style="left:330px;top:216px" width="15" height="13"><use href="#hidepane"/></svg>
<div class="a sunk clip" style="left:165px;top:232px;width:206px;height:306px;background:#fff">
<svg class="a" style="left:3px;top:4px" width="13" height="13"><use href="#scroll"/></svg>
<div class="a" style="left:19.50px;top:1.80px;font-size:11px;line-height:16px;letter-spacing:-0.212px;color:#000;">Server_Group_GPO [WS08R2.WS08.COM] Policy</div>
<svg class="a" style="left:17.5px;top:20px" width="13" height="13"><use href="#computer"/></svg>
<div class="a pm7" style="left:5.8px;top:23px;width:7px;height:7px;"></div>
<div class="a" style="left:33.50px;top:17.30px;font-size:11px;line-height:16px;letter-spacing:-0.059px;color:#000;">Computer Configuration</div>
<svg class="a" style="left:32.5px;top:36px" width="12" height="12"><use href="#folder2"/></svg>
<div class="a pm7" style="left:20.8px;top:39px;width:7px;height:7px;"></div>
<div class="a" style="left:48.50px;top:32.80px;font-size:11px;line-height:16px;letter-spacing:-0.551px;color:#000;">Policies</div>
<svg class="a" style="left:47.5px;top:51px" width="12" height="12"><use href="#folder2"/></svg>
<div class="a pm7" style="left:35.8px;top:54px;width:7px;height:7px;"></div>
<div class="a" style="left:63.00px;top:48.30px;font-size:11px;line-height:16px;letter-spacing:-0.101px;color:#000;">Software Settings</div>
<div class="a " style="left:76px;top:65px;width:97px;height:15px;background:#0a246a"></div>
<svg class="a" style="left:61px;top:66px" width="13" height="13"><use href="#swinst"/></svg>
<div class="a" style="left:78.50px;top:63.80px;font-size:11px;line-height:16px;letter-spacing:-0.260px;color:#fff;">Software installation</div>
<svg class="a" style="left:47.5px;top:82px" width="12" height="12"><use href="#folder2"/></svg>
<div class="a pm7 p" style="left:35.8px;top:85px;width:7px;height:7px;"></div>
<div class="a" style="left:63.00px;top:79.30px;font-size:11px;line-height:16px;letter-spacing:-0.121px;color:#000;">Windows Settings</div>
<svg class="a" style="left:47.5px;top:98px" width="12" height="12"><use href="#folder2"/></svg>
<div class="a pm7 p" style="left:35.8px;top:101px;width:7px;height:7px;"></div>
<div class="a" style="left:63.00px;top:94.80px;font-size:11px;line-height:16px;letter-spacing:-0.176px;color:#000;">Administrative Templates: Pol</div>
<svg class="a" style="left:32.5px;top:113px" width="12" height="12"><use href="#folder2"/></svg>
<div class="a pm7 p" style="left:20.8px;top:116px;width:7px;height:7px;"></div>
<div class="a" style="left:48.50px;top:110.30px;font-size:11px;line-height:16px;letter-spacing:-0.301px;color:#000;">Preferences</div>
<svg class="a" style="left:18px;top:128px" width="13" height="13"><use href="#user"/></svg>
<div class="a pm7" style="left:5.8px;top:132px;width:7px;height:7px;"></div>
<div class="a" style="left:33.50px;top:125.80px;font-size:11px;line-height:16px;letter-spacing:-0.179px;color:#000;">User Configuration</div>
<svg class="a" style="left:32.5px;top:144px" width="12" height="12"><use href="#folder2"/></svg>
<div class="a pm7" style="left:20.8px;top:147px;width:7px;height:7px;"></div>
<div class="a" style="left:48.50px;top:141.30px;font-size:11px;line-height:16px;letter-spacing:-0.551px;color:#000;">Policies</div>
<svg class="a" style="left:32.5px;top:160px" width="12" height="12"><use href="#folder2"/></svg>
<div class="a pm7 p" style="left:20.8px;top:163px;width:7px;height:7px;"></div>
<div class="a" style="left:48.50px;top:156.80px;font-size:11px;line-height:16px;letter-spacing:-0.301px;color:#000;">Preferences</div>
<div class="a hatch" style="left:1px;top:288px;width:202px;height:16px;"></div>
<div class="a rais" style="left:1px;top:288px;width:15px;height:16px;"><svg width="13" height="14" style="display:block"><path d="M8.0 3.0v8l-4-4z" fill="#000"/></svg></div>
<div class="a rais" style="left:188px;top:288px;width:15px;height:16px;"><svg width="13" height="14" style="display:block"><path d="M5.0 3.0v8l4-4z" fill="#000"/></svg></div>
<div class="a rais" style="left:17px;top:288px;width:70px;height:16px;"></div>
</div>
<div class="a sunk clip" style="left:372px;top:232px;width:403px;height:306px;background:#fff">
<div class="a rais" style="left:2px;top:2px;width:140px;height:18px;border-left-color:#d4d0c8"></div>
<div class="a" style="left:5.00px;top:3.00px;font-size:11.5px;line-height:16px;letter-spacing:-0.927px;color:#000;">Name</div>
</div>
<div class="a " style="left:166px;top:540px;width:609px;height:17px;border:1px solid;border-color:#808080 #fff #fff #808080"></div>
<div class="a win" style="left:400px;top:190px;width:374px;height:384px;"></div>
<div class="a cap" style="left:403px;top:193px;width:368px;height:16px;"></div>
<div class="a" style="left:402.50px;top:193.50px;font-size:11.5px;line-height:16px;letter-spacing:-0.450px;color:#fff;font-weight:bold;">IDrive® 360 Properties</div>
<div class="a rais" style="left:739px;top:195px;width:15px;height:13px;"><svg width="13" height="11" viewBox="1 1 13 11" style="display:block"><text x="7.5" y="10.7" font-family="Liberation Sans, sans-serif" font-size="12" font-weight="bold" text-anchor="middle" fill="#000">?</text></svg></div>
<div class="a rais" style="left:755px;top:195px;width:15px;height:13px;"><svg width="13" height="11" viewBox="1 1 13 11" style="display:block"><path d="M4.0 3.0l7 6.500M11.0 3.0l-7 6.500" stroke="#000" stroke-width="1.9"/></svg></div>
<div class="a page" style="left:407px;top:232px;width:359px;height:309px;"></div>
<div class="a tab" style="left:409px;top:217px;width:41px;height:15px;"></div>
<div class="a" style="left:412.50px;top:217.00px;font-size:10.0px;line-height:16px;letter-spacing:-0.225px;color:#000;">General</div>
<div class="a tab" style="left:450px;top:217px;width:60px;height:15px;"></div>
<div class="a" style="left:454.00px;top:217.00px;font-size:10.0px;line-height:16px;letter-spacing:-0.136px;color:#000;">Deployment</div>
<div class="a tab" style="left:510px;top:217px;width:50px;height:15px;"></div>
<div class="a" style="left:513.50px;top:217.00px;font-size:10.0px;line-height:16px;letter-spacing:-0.045px;color:#000;">Upgrades</div>
<div class="a tab" style="left:560px;top:217px;width:55px;height:15px;"></div>
<div class="a" style="left:564.50px;top:217.00px;font-size:10.0px;line-height:16px;letter-spacing:-0.236px;color:#000;">Categories</div>
<div class="a tab" style="left:681px;top:217px;width:40px;height:15px;"></div>
<div class="a" style="left:683.50px;top:217.00px;font-size:10.0px;line-height:16px;letter-spacing:-0.266px;color:#000;">Security</div>
<div class="a tab" style="left:614px;top:215px;width:68px;height:19px;"></div>
<div class="a" style="left:619.50px;top:215.50px;font-size:10.0px;line-height:16px;letter-spacing:-0.220px;color:#000;">Modifications</div>
<div class="a" style="left:419.00px;top:241.00px;font-size:9.7px;line-height:16px;letter-spacing:-0.133px;color:#000;">Modifications or transforms allow you to customize the package and are applied</div>
<div class="a" style="left:419.00px;top:251.50px;font-size:9.7px;line-height:16px;letter-spacing:-0.222px;color:#000;">to the package in the order shown in the following list:</div>
<div class="a" style="left:419.00px;top:271.50px;font-size:9.7px;line-height:16px;letter-spacing:-0.195px;color:#000;">Modifications:</div>
<div class="a sunk" style="left:418px;top:289px;width:251px;height:132px;background:#fff"></div>
<div class="a " style="left:420px;top:291px;width:247px;height:12px;background:#0a246a"></div>
<div class="a" style="left:421.00px;top:289.00px;font-size:9.7px;line-height:16px;letter-spacing:-0.147px;color:#fff;">\\ws08r2\DomainShare\MST_Deployment\IDrive360.mst</div>
<div class="a hatch" style="left:420px;top:407px;width:247px;height:12px;"></div>
<div class="a rais" style="left:420px;top:407px;width:13px;height:12px;"><svg width="11" height="10" style="display:block"><path d="M7.0 1.0v8l-4-4z" fill="#000"/></svg></div>
<div class="a rais" style="left:654px;top:407px;width:13px;height:12px;"><svg width="11" height="10" style="display:block"><path d="M4.0 1.0v8l4-4z" fill="#000"/></svg></div>
<div class="a rais" style="left:433px;top:407px;width:182px;height:12px;"></div>
<div class="a rais" style="left:681px;top:290px;width:71px;height:19px;"></div>
<div class="a" style="left:696.50px;top:291.50px;font-size:10.0px;line-height:16px;letter-spacing:-0.074px;color:#808080;text-shadow:1px 1px 0 #fff;">Move Up</div>
<div class="a rais" style="left:681px;top:316px;width:71px;height:19px;"></div>
<div class="a" style="left:690.50px;top:317.50px;font-size:10.0px;line-height:16px;letter-spacing:-0.312px;color:#808080;text-shadow:1px 1px 0 #fff;">Move Down</div>
<div class="a " style="left:419px;top:433px;width:70px;height:20px;background:#000"></div>
<div class="a rais" style="left:420px;top:434px;width:68px;height:18px;"></div>
<div class="a" style="left:441.50px;top:435.00px;font-size:10.0px;line-height:16px;letter-spacing:-0.273px;color:#000;">Add...</div>
<div class="a rais" style="left:496px;top:433px;width:70px;height:20px;"></div>
<div class="a" style="left:512.50px;top:435.00px;font-size:10.0px;line-height:16px;letter-spacing:-0.125px;color:#000;">Remove</div>
<div class="a hsep" style="left:420px;top:462px;width:332px;height:2px;"></div>
<div class="a" style="left:419.50px;top:466.50px;font-size:9.7px;line-height:16px;letter-spacing:-0.184px;color:#000;">Important! Do not press OK until all transforms are added and ordered correctly.</div>
<div class="a" style="left:419.50px;top:477.00px;font-size:9.7px;line-height:16px;letter-spacing:-0.209px;color:#000;">For more information, right-click on the Modifications list box, and then click</div>
<div class="a" style="left:419.50px;top:488.00px;font-size:9.7px;line-height:16px;letter-spacing:-0.122px;color:#000;">What&#x27;s this?</div>
<div class="a rais" style="left:693px;top:546px;width:71px;height:19px;"></div>
<div class="a" style="left:712.50px;top:547.50px;font-size:10.0px;line-height:16px;letter-spacing:0.060px;color:#000;">Cancel</div>
<div class="a " style="left:618px;top:532px;width:111px;height:39px;background:#d9d6ce;box-shadow:0 0 3px rgba(0,0,0,.35)"></div>
<div class="a rais" style="left:624px;top:539px;width:99px;height:27px;background:#d9d6ce"></div>
<div class="a" style="left:665.00px;top:543.00px;font-size:15px;line-height:18px;letter-spacing:-1.594px;color:#3a3a3a;">OK</div>
<div class="a " style="left:0px;top:577px;width:800px;height:39px;background:#d4d0c8;border-top:1px solid #6c6c6c;box-shadow:inset 0 1px 0 #fff"></div>
<div class="a " style="left:0px;top:615px;width:800px;height:1px;background:#808080"></div>
<div class="a " style="left:1px;top:580px;width:45px;height:33px;border:1px solid;border-color:#555 #fff #fff #9a9a9a;box-shadow:inset 0 1px 0 #707070;background:#dbd8d1"></div>
<svg class="a" style="left:3px;top:589px" width="14" height="15" viewBox="0 0 14 15"><g transform="skewX(-8) translate(2,0)"><path d="M1 2.500c2-1.500 3.800-1.200 5.300 0L5.600 7.200C4 6 2.300 6 .4 7.200z" fill="#e8452c"/><path d="M7 3c1.800 1.200 3.600 1.200 5.500-.2l-.7 4.700c-1.800 1.300-3.700 1.300-5.500 0z" fill="#6cbb3c"/><path d="M.3 8.300c2-1.200 3.700-1.200 5.200 0l-.7 4.700c-1.500-1.200-3.200-1.200-5.100 0z" fill="#3a7ee0"/><path d="M6.200 8.600c1.800 1.200 3.600 1.200 5.500 0l-.7 4.600c-1.900 1.300-3.700 1.300-5.500 0z" fill="#f4c21c"/></g></svg>
<div class="a" style="left:18.00px;top:589.50px;font-size:11.5px;line-height:16px;letter-spacing:-0.381px;color:#000;font-weight:bold;">Start</div>
<svg class="a" style="left:59px;top:582px" width="28" height="29" viewBox="0 0 28 29"><defs><linearGradient id="tw" x1="0" y1="0" x2="1" y2="0"><stop offset="0" stop-color="#5f6b78"/><stop offset=".45" stop-color="#8792a0"/><stop offset=".5" stop-color="#c9d0d8"/><stop offset="1" stop-color="#99a3ad"/></linearGradient></defs>
<path d="M1.500 1.500 10 .8l8.500 1V24h-17z" fill="url(#tw)" stroke="#56606c" stroke-width=".6"/>
<path d="M2.500 4.500h7M2.500 7h7M2.500 9.500h7M2.500 12h7" stroke="#3f4954" stroke-width="1.100"/>
<path d="M11 15v-1.800c0-1 .8-1.700 1.700-1.700h3.600c1 0 1.700.8 1.700 1.700V15" fill="none" stroke="#222c38" stroke-width="1.500"/>
<path d="M5.500 15h18l2.200 3.500v8c0 .8-.6 1.300-1.300 1.300H5.300c-.8 0-1.300-.5-1.300-1.300v-9z" fill="url(#gbox)" stroke="#4a5d72" stroke-width=".8"/>
<path d="M4.200 19h21.300" stroke="#3f5268" stroke-width=".8"/>
<rect x="9" y="17.800" width="2" height="3.200" fill="#e6ecf2"/><rect x="18.500" y="17.800" width="2" height="3.200" fill="#e6ecf2"/></svg>
<svg class="a" style="left:100px;top:585px" width="30" height="22" viewBox="0 0 30 22"><defs><linearGradient id="ps" x1="0" y1="0" x2="0" y2="1"><stop offset="0" stop-color="#5a97e0"/><stop offset="1" stop-color="#1d55ad"/></linearGradient></defs>
<path d="M7.500 2.500h19.500c.8 0 1.200.6 1 1.300l-4 14.700c-.2.700-.8 1.200-1.600 1.200H3c-.8 0-1.200-.6-1-1.300l4-14.700c.2-.7.800-1.200 1.500-1.200z" fill="url(#ps)" stroke="#9cc0ee" stroke-width=".8"/>
<path d="M9.500 5.500l7 5.300-8.500 5.700" fill="none" stroke="#fff" stroke-width="2.200" stroke-linejoin="round" stroke-linecap="round"/>
<path d="M15 17h6" stroke="#fff" stroke-width="2" stroke-linecap="round"/></svg>
<svg class="a" style="left:142px;top:582px" width="30" height="30" viewBox="0 0 30 30"><path d="M1 4c0-1 .6-1.500 1.500-1.500h7l2 2H27c1 0 1.500.6 1.500 1.500v3H1z" fill="#e9c55c" stroke="#c9a03c" stroke-width=".7"/>
<rect x="4" y="2.800" width="2.500" height="2" fill="#3cae3c"/><rect x="11" y="4" width="3" height="2" fill="#e03a2a"/><rect x="16.500" y="5" width="3" height="2" fill="#2f7fe0"/>
<rect x="3" y="5.500" width="23" height="6" fill="#fbf7e6"/>
<path d="M.8 9.500c0-.8.600-1.300 1.400-1.300h25.600c.8 0 1.400.5 1.400 1.300l-.8 16c0 .8-.7 1.300-1.500 1.300H3.100c-.8 0-1.500-.5-1.500-1.300z" fill="url(#gfold)" stroke="#cfa544" stroke-width=".7"/>
<path d="M4.500 28.500v-10c0-1.500 1-2.500 2.500-2.500h16c1.500 0 2.500 1 2.500 2.500v10h-5.500v-6.500h-10v6.500z" fill="#5ba7e8" stroke="#3c86cc" stroke-width=".8"/>
<path d="M5.500 19c0-1.200.7-2 2-2h15c1.300 0 2 .8 2 2" fill="none" stroke="#a8d4f6" stroke-width="1"/></svg>
<div class="a " style="left:176px;top:581px;width:40px;height:32px;border:1px solid;border-color:#404040 #fff #fff #404040;box-shadow:inset 1px 1px 0 #808080;background:#fff"></div>
<svg class="a" style="left:183px;top:583px" width="26" height="26"><use href="#scroll"/></svg>
<svg class="a" style="left:191px;top:596px" width="20" height="15" viewBox="0 0 10 8"><use href="#toolbox"/></svg>
<div class="a rais" style="left:220px;top:581px;width:41px;height:32px;"></div>
<svg class="a" style="left:227px;top:583px" width="28" height="28" viewBox="0 0 28 28"><circle cx="14" cy="14" r="13.500" fill="#fff"/>
<path d="M14 14 2.300 7.250A13.500 13.500 0 0 1 25.700 7.250z" fill="#db4437"/>
<path d="M14 14 25.700 7.250A13.500 13.500 0 0 1 14 27.500z" fill="#ffcd40"/>
<path d="M14 14 14 27.500A13.500 13.500 0 0 1 2.300 7.250z" fill="#0f9d58"/>
<path d="M14 8h11.300" stroke="#db4437" stroke-width=".1"/>
<path d="M14 7.800h11.950A13.500 13.500 0 0 1 14 27.500l5.400-10.400z" fill="#ffcd40"/>
<path d="M2.300 7.250 8.600 17.100 14 27.500A13.500 13.500 0 0 1 2.300 7.250z" fill="#0f9d58"/>
<path d="M14 7.800H25.950A13.500 13.500 0 0 0 2.300 7.250L8.600 17.100z" fill="#db4437"/>
<path d="M8.600 17.100 14 27.500l5.400-10.400z" fill="#0f9d58"/>
<path d="M14 27.500A13.500 13.500 0 0 0 25.950 7.800H14l5.400 9.300z" fill="#ffcd40"/>
<circle cx="14" cy="14" r="6.200" fill="#fff"/><circle cx="14" cy="14" r="4.900" fill="#4285f4"/></svg>
<div class="a " style="left:640px;top:580px;width:156px;height:32px;border:1px solid;border-color:#808080 #fff #fff #808080"></div>
<svg class="a" style="left:645.5px;top:590.5px" width="6" height="9" viewBox="0 0 6 9"><path d="M1 3.800 3 1.800 5 3.800M1 7.300 3 5.300 5 7.300" fill="none" stroke="#000" stroke-width="1.100"/></svg>
<svg class="a" style="left:659px;top:587px" width="17" height="17" viewBox="0 0 17 17"><path d="M2.500 1.500v15" stroke="#8c8c8c" stroke-width="1.800"/><path d="M3.500 2.300c3-1.300 5 1.300 8 0 .6 1.800 2 2.400 4 2.400-1.800 1.300-1.800 3.300-.3 4.800-3 1.400-4.500-1-7.700.4-1-.9-2.500-.9-4-.4z" fill="#f8f8f8" stroke="#8a8a8a" stroke-width=".9"/></svg>
<svg class="a" style="left:680px;top:586px" width="18" height="19" viewBox="0 0 18 19"><rect x="6" y="4.500" width="10.500" height="8" fill="#dfe5ee" stroke="#555" stroke-width=".9"/><rect x="7.500" y="6" width="7.500" height="5" fill="#8fa2b8"/><rect x="3.500" y="13.500" width="11" height="3.500" fill="#e4e4e4" stroke="#666" stroke-width=".8"/><rect x="1.500" y="1" width="4.500" height="7" rx="1.500" fill="#f4f4f4" stroke="#555" stroke-width=".9"/><path d="M3.700 8v5.500" stroke="#555" stroke-width="1"/></svg>
<svg class="a" style="left:702px;top:586px" width="17" height="19" viewBox="0 0 17 19"><path d="M1.500 7h3l4.500-4.500v14L4.500 12h-3z" fill="#f6f6f6" stroke="#777" stroke-width=".9"/><circle cx="12" cy="14" r="4.200" fill="#e32b22" stroke="#fff" stroke-width=".6"/><path d="M10.200 12.200l3.600 3.600M13.800 12.200l-3.600 3.600" stroke="#fff" stroke-width="1.300"/></svg>
<div class="a" style="left:732.50px;top:581.50px;font-size:12px;line-height:16px;letter-spacing:-0.886px;color:#000;">9:15 PM</div>
<div class="a" style="left:725.00px;top:595.50px;font-size:12px;line-height:16px;letter-spacing:-0.656px;color:#000;">10/14/2020</div>
<div class="a " style="left:780px;top:592px;width:13px;height:10px;background:linear-gradient(135deg,#4a8ef0,#1c5bc8);border:1px solid #9ec4f8;border-right-color:#184a9e;border-bottom-color:#184a9e"></div>
</body></html>
